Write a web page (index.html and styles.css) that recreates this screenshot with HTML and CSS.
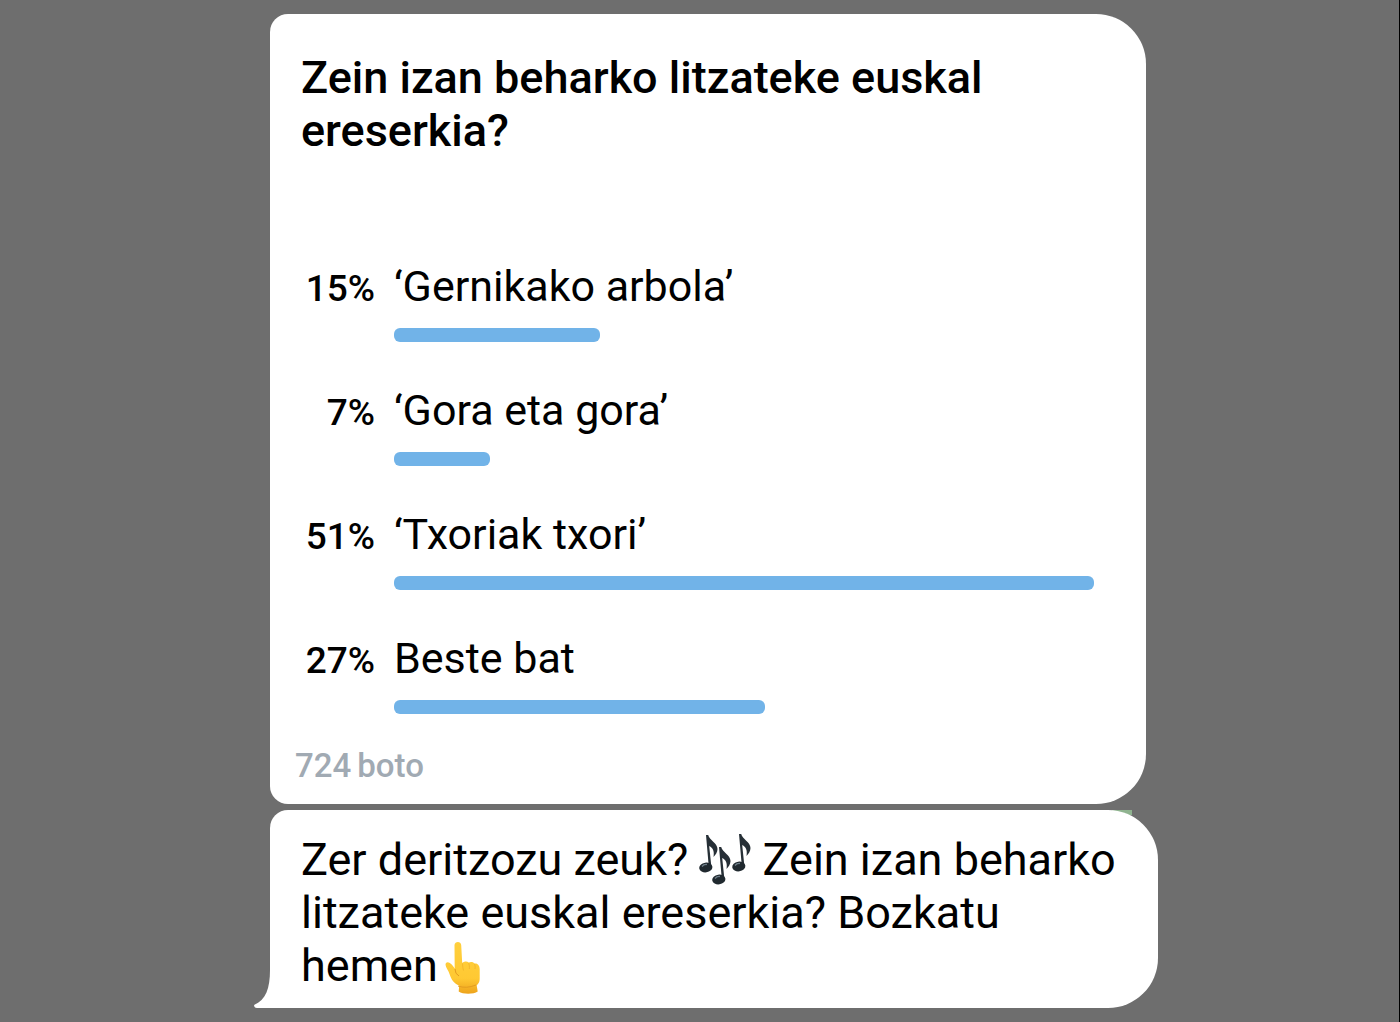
FILE: index.html
```html
<!DOCTYPE html>
<html lang="eu">
<head>
<meta charset="utf-8">
<meta name="viewport" content="width=device-width, initial-scale=1">
<title>Inkesta</title>
<link rel="stylesheet" href="styles.css">
</head>
<body>
<main class="chat">
  <section class="bubble poll">
    <h1 class="question">Zein izan beharko litzateke euskal ereserkia?</h1>
    <ul class="options">
      <li class="option"><span class="percent">15%</span><span class="label">‘Gernikako arbola’</span><div class="track"><div class="bar" style="width:29.4%"></div></div></li>
      <li class="option"><span class="percent">7%</span><span class="label">‘Gora eta gora’</span><div class="track"><div class="bar" style="width:13.7%"></div></div></li>
      <li class="option"><span class="percent">51%</span><span class="label">‘Txoriak txori’</span><div class="track"><div class="bar" style="width:100%"></div></div></li>
      <li class="option"><span class="percent">27%</span><span class="label">Beste bat</span><div class="track"><div class="bar" style="width:53%"></div></div></li>
    </ul>
    <p class="votes"><span>724</span><span>boto</span></p>
  </section>
  <section class="bubble message">
    <span class="sliver"></span>
    <p class="text">Zer deritzozu zeuk? <svg class="notes" viewBox="0 0 52 52" role="img" aria-label="Musika notak">
        <defs>
          <g id="note">
            <path d="M7 2h2.200c1 5 9.300 8 9.300 14 0 3-2 6-4 8 1-6-.5-9-4.300-11l2.300 22h-2.600z" fill="#262f36"/>
            <ellipse cx="6.800" cy="34.500" rx="6.600" ry="4.900" transform="rotate(-8 6.800 34.500)" fill="#20292f"/>
            <path d="M3 33.500q2-2.500 5-2" fill="none" stroke="#6f7e89" stroke-width="1.300"/>
          </g>
        </defs>
        <use href="#note" x="0" y="0"/>
        <use href="#note" x="13" y="12"/>
        <use href="#note" x="33" y="-1"/>
      </svg> Zein izan beharko litzateke euskal ereserkia? Bozkatu hemen<svg class="hand" viewBox="0 0 46 53" role="img" aria-label="Gora seinalatzen duen hatza">
        <defs>
          <linearGradient id="skin" x1="0" x2="0" y1="0" y2="1"><stop offset="0" stop-color="#ffcf3d"/><stop offset=".7" stop-color="#ffc933"/><stop offset="1" stop-color="#eda31c"/></linearGradient>
        </defs>
        <path d="M16.500 4c.3-4 6.500-4 6.700 0l1 18c2-2 5-2 6.500-.5 2-1 5-.5 6 1 3-.5 5 2 5 6v9c0 4-1.500 5-3 7l1 6c-4 3-15 3-19 0l.5-6c-5-2-8-6-9.500-11-1-4-5-8-4-11 2-3 6 0 9 5z" fill="url(#skin)"/>
        <path d="M24.500 22.500q.2 5 1 7M30.700 22q1 3 .7 6M36.700 23q.8 3 .3 5" fill="none" stroke="#f0b32a" stroke-width=".8"/>
        <path d="M17 28q0 5 4 7M20 45q8 3 18-1" fill="none" stroke="#e39c20" stroke-width="1"/>
      </svg></p>
    <svg class="tail" viewBox="0 0 16 38" aria-hidden="true"><path d="M16 0C16 18 12 30 0 35q0 3 3 3h13z" fill="#fff"/></svg>
  </section>
</main>
</body>
</html>
```
FILE: styles.css
```css
* {
  box-sizing: border-box;
}

body {
  margin: 0;
  min-height: 100vh;
  padding: 14px 0 14px 29px;
  border-right: 1px solid #000;
  background: #6e6e6e;
  color: #000;
  font-family: Roboto, "Noto Sans", sans-serif;
}

h1,
p,
ul {
  margin: 0;
  padding: 0;
}

.chat {
  display: flex;
  flex-direction: column;
  gap: 6px;
  max-width: 888px;
  margin: 0 auto;
}

.bubble {
  position: relative;
  background: #fff;
}

.poll {
  margin-right: 12px;
  padding: 37px 52px 18px 31px;
  border-radius: 18px 50px 50px 18px;
}

.question {
  font-size: 45px;
  font-weight: 500;
  line-height: 53px;
}

.options {
  display: grid;
  gap: 42px;
  margin-top: 103px;
  list-style: none;
}

.option {
  display: grid;
  grid-template-columns: 74px 1fr;
  column-gap: 19px;
  row-gap: 15px;
  align-items: baseline;
}

.percent {
  font-size: 37px;
  font-weight: 500;
  line-height: 44px;
  text-align: right;
}

.label {
  font-size: 43px;
  line-height: 53px;
}

.track {
  grid-column: 2;
}

.bar {
  height: 14px;
  border-radius: 6px;
  background: #71b3e8;
}

.votes {
  display: flex;
  gap: 6px;
  margin: 32px 0 0 -6px;
  color: #a1aab3;
  font-size: 33px;
  font-weight: 500;
  line-height: 40px;
}

.message {
  padding: 23px 40px 16px 31px;
  border-radius: 18px 50px 50px 0;
}

.text {
  font-size: 45px;
  line-height: 53px;
}

.notes {
  width: 52px;
  height: 52px;
  vertical-align: -10px;
}

.hand {
  width: 46px;
  height: 53px;
  margin-bottom: -2px;
  vertical-align: -11px;
}

.tail {
  position: absolute;
  right: 100%;
  bottom: 0;
  width: 16px;
  height: 38px;
}

.sliver {
  position: absolute;
  z-index: -1;
  top: 0;
  right: 26px;
  width: 20px;
  height: 5px;
  background: #8fb38f;
}
```
